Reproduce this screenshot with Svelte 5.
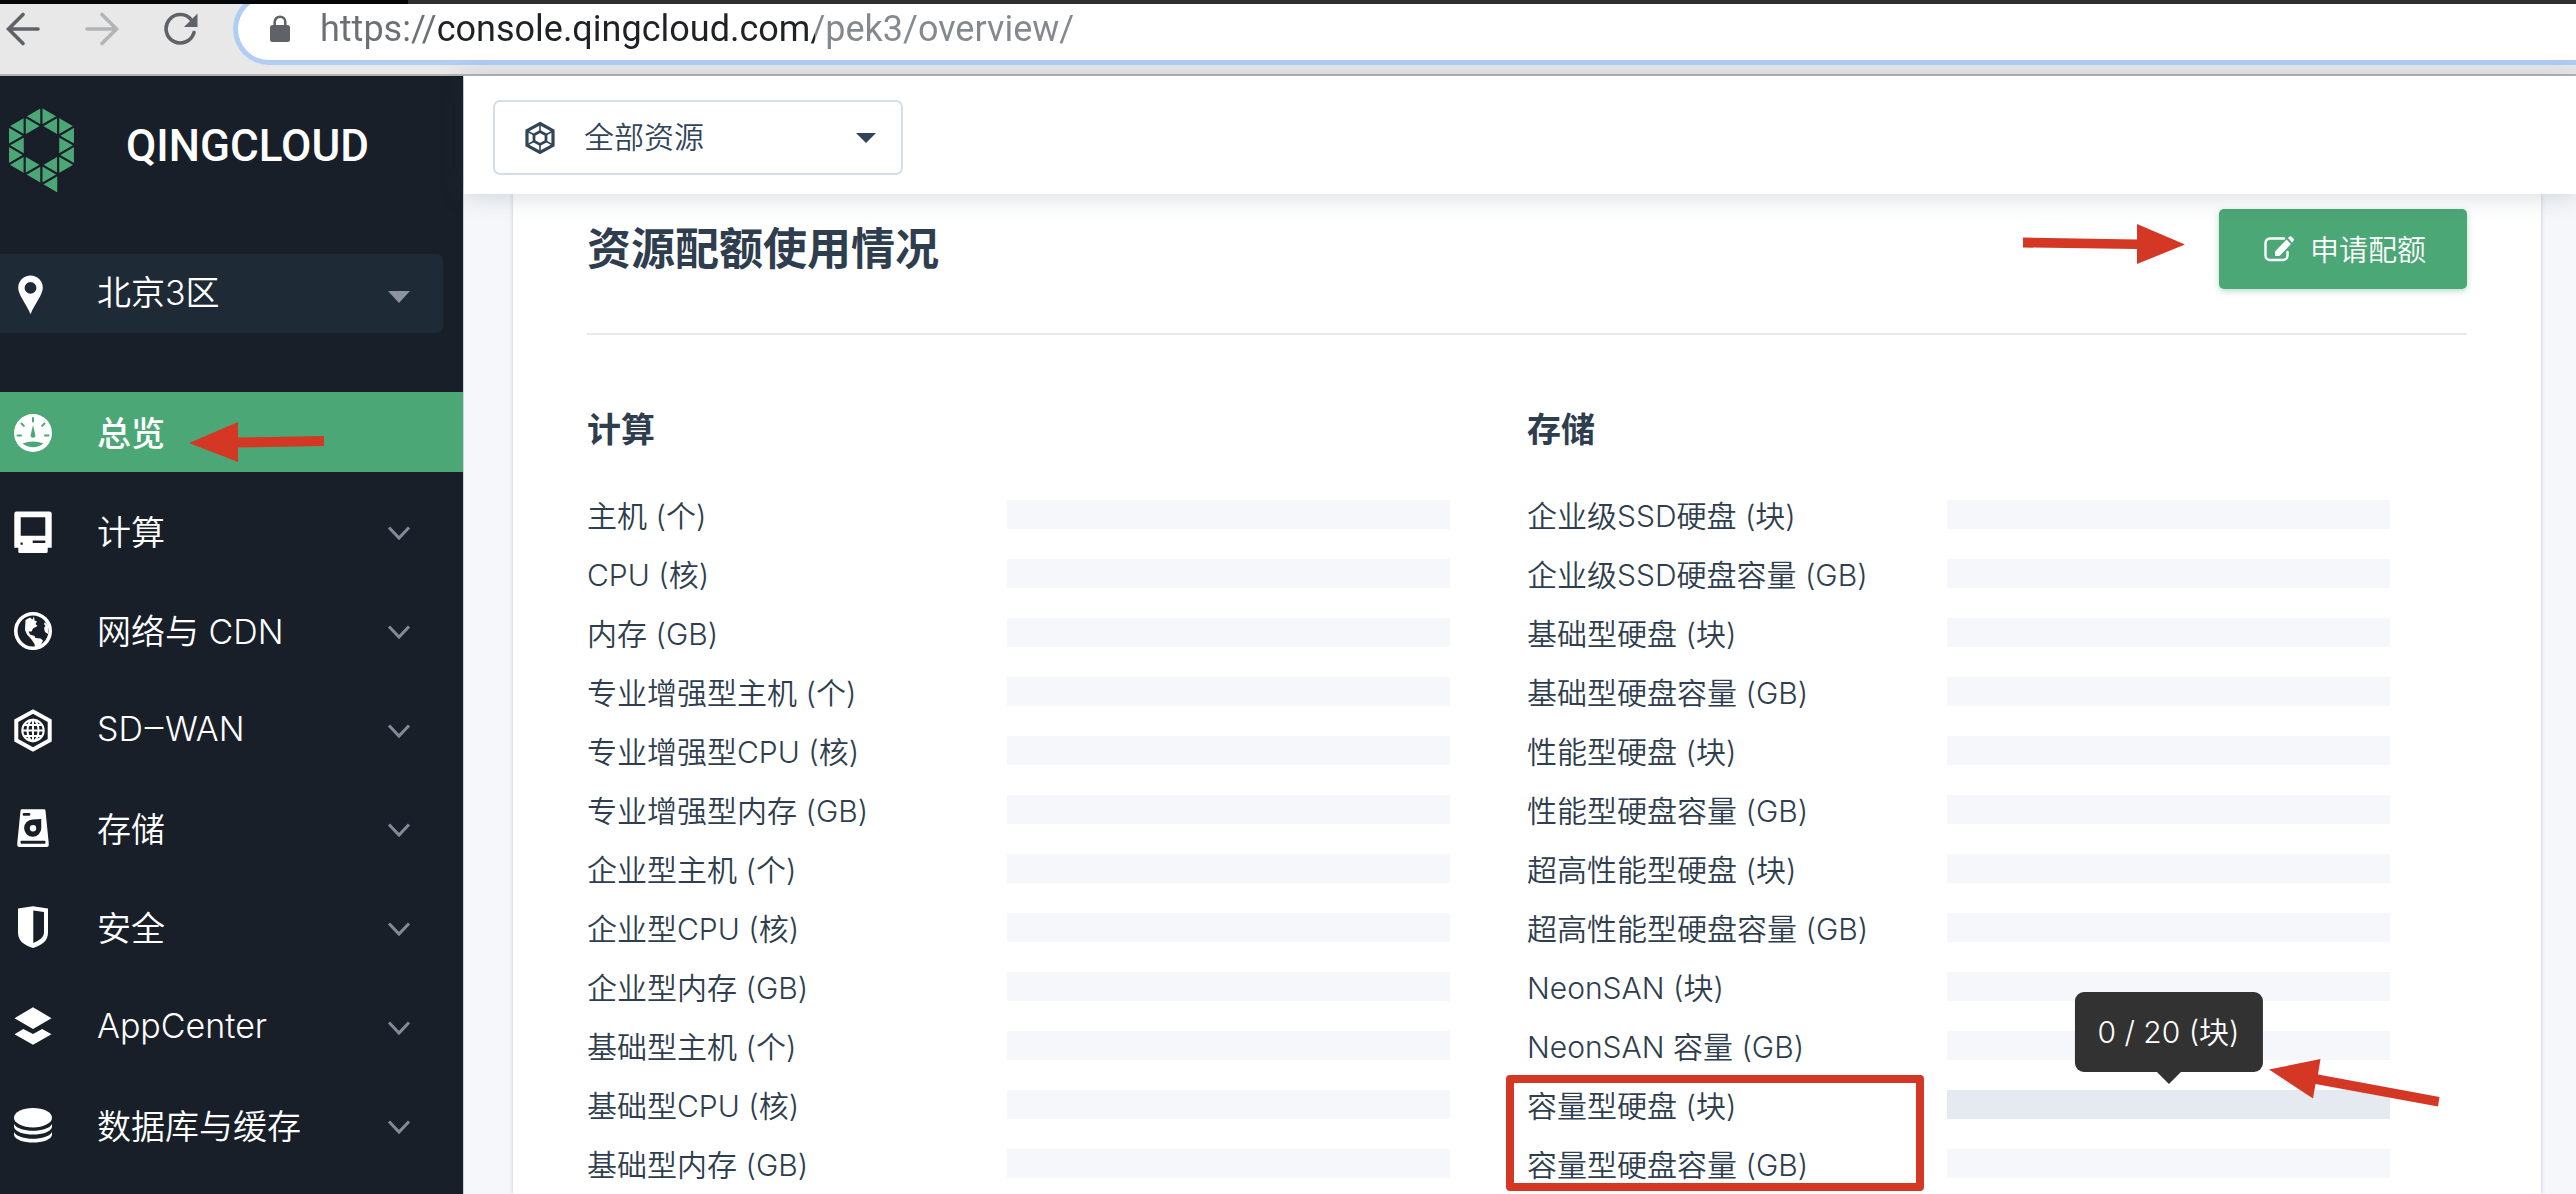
<!--
  Console overview page: browser toolbar, service sidebar and the
  resource quota card, with pointer arrows that mark the steps.
-->

<script lang="ts">
	type NavItem = { icon: string; label: string; active?: boolean };

	const navItems: NavItem[] = [
		{ icon: 'dashboard', label: '总览', active: true },
		{ icon: 'compute', label: '计算' },
		{ icon: 'network', label: '网络与 CDN' },
		{ icon: 'sdwan', label: 'SD‒WAN' },
		{ icon: 'storage', label: '存储' },
		{ icon: 'security', label: '安全' },
		{ icon: 'apps', label: 'AppCenter' },
		{ icon: 'database', label: '数据库与缓存' },
	];

	const computeQuotas = [
		'主机 (个)',
		'CPU (核)',
		'内存 (GB)',
		'专业增强型主机 (个)',
		'专业增强型CPU (核)',
		'专业增强型内存 (GB)',
		'企业型主机 (个)',
		'企业型CPU (核)',
		'企业型内存 (GB)',
		'基础型主机 (个)',
		'基础型CPU (核)',
		'基础型内存 (GB)',
	];

	const storageQuotas = [
		'企业级SSD硬盘 (块)',
		'企业级SSD硬盘容量 (GB)',
		'基础型硬盘 (块)',
		'基础型硬盘容量 (GB)',
		'性能型硬盘 (块)',
		'性能型硬盘容量 (GB)',
		'超高性能型硬盘 (块)',
		'超高性能型硬盘容量 (GB)',
		'NeonSAN (块)',
		'NeonSAN 容量 (GB)',
		'容量型硬盘 (块)',
		'容量型硬盘容量 (GB)',
	];

	const sections = [
		{ title: '计算', rows: computeQuotas, hovered: -1 },
		{ title: '存储', rows: storageQuotas, hovered: 10 },
	];

	/** Logo triangles as [edge x, apex x, centre y] on the lattice. */
	const logoTriangles = [
		[100, 50, 28], [100, 150, 28],
		[50, 0, 57], [50, 100, 57], [150, 100, 57], [150, 200, 57],
		[0, 50, 86], [200, 150, 86],
		[50, 0, 115], [150, 200, 115],
		[0, 50, 144], [200, 150, 144],
		[50, 0, 173], [50, 100, 173], [150, 100, 173], [150, 200, 173],
		[100, 50, 202], [100, 150, 202],
		[150, 100, 231],
	];

	let url = $state('https://console.qingcloud.com/pek3/overview/');
	let zone = $state('pek3');
	let scope = $state('all');
</script>

{#snippet navIcon(name: string)}
	<svg class="nav-icon" viewBox="0 0 40 44" aria-hidden="true">
		{#if name === 'pin'}
			<path fill-rule="evenodd" d="M17.5 3.5a12.3 12.3 0 0 1 12.3 12.3c0 7-7.5 15-12.3 26.5C12.7 30.8 5.2 22.8 5.2 15.8A12.3 12.3 0 0 1 17.5 3.5zM17.5 10a5.9 5.9 0 1 0 0 11.8a5.9 5.9 0 0 0 0-11.8z" />
		{:else if name === 'dashboard'}
			<path fill-rule="evenodd" d="M20 4a19 19 0 1 1 0 38a19 19 0 0 1 0-38zM20 15l2.2 9.5a2.4 2.4 0 1 1-4.4 0zM9.5 33.5Q20 29.5 30.5 33.5Q20 41 9.5 33.5z" />
			<path class="cut" d="M20 8v3.5M4.5 25.5h3.5M32 25.5h3.5M8.5 13.5l2.4 2.4M31.5 13.5l-2.4 2.4" />
		{:else if name === 'compute'}
			<path fill-rule="evenodd" d="M3.5 2.5h33a2.2 2.2 0 0 1 2.2 2.2v34.1h-4v3.7a1.5 1.5 0 0 1-1.5 1.5H6.8a1.5 1.5 0 0 1-1.5-1.5v-3.7h-4V4.7a2.2 2.2 0 0 1 2.2-2.2zM7.7 8.3v18.5h24.6V8.3zM19.7 31.5v2.5h12.6v-2.5zM7.5 33.5v2.2h2.2v-2.2z" />
		{:else if name === 'network'}
			<circle cx="20" cy="23" r="17.2" fill="none" stroke="#fff" stroke-width="3.6" />
			<path d="M12.5 12l4.5-2.5 2.5 2 1.5-3 .5 4 2.5 1-1.5 2.5 2 2-4.5 2.5-1.5 3h-3l1.5 3 4.5 1.5 1 2 5 .5 2.5 2-2 4-4 3.5-1.5 2-1-6-3-4.5-4.5-5-2-4.5zM32 14l3 4v8l-3-2-1-4 1.500-2-1.500-2z" />
		{:else if name === 'sdwan'}
			<path d="M20 4.5l16.7 9.3v19.4L20 42.5 3.3 33.2V13.8z" fill="none" stroke="#fff" stroke-width="4" />
			<g fill="none" stroke="#fff" stroke-width="2">
				<circle cx="20" cy="23.5" r="10.7" />
				<ellipse cx="20" cy="23.5" rx="5.5" ry="10.7" />
				<path d="M20 13v21M9.5 23.5h21M11.5 18h17M11.5 29h17" />
			</g>
		{:else if name === 'storage'}
			<path fill-rule="evenodd" d="M9 3.3h22a1.5 1.5 0 0 1 1.5 1.4l3.2 32v2.5a1.8 1.8 0 0 1-1.8 1.8H6.1a1.8 1.8 0 0 1-1.8-1.8v-2.5l3.2-32A1.5 1.5 0 0 1 9 3.3zM11 7a1.2 1.2 0 0 0 0 2.8h5a1.2 1.2 0 0 0 0-2.8zM28.2 13l-8.5.5a8.6 8.6 0 1 0 8.6 8.6zM20 19a3.2 3.2 0 1 1 0 6.4a3.2 3.2 0 0 1 0-6.4zM8.5 34.7a1 1 0 0 0-1 1v1a1 1 0 0 0 1 1h23a1 1 0 0 0 1-1v-1a1 1 0 0 0-1-1z" />
		{:else if name === 'security'}
			<path fill-rule="evenodd" d="M20 1.3L35 3.5v24c0 9-7 13-15 15.5C12 40.500 5 36.500 5 27.500v-24zM20.300 5.500V38c6-2.500 10.700-5.500 10.700-11V7z" />
		{:else if name === 'apps'}
			<path d="M20 3.3l18.5 10.9L20 25 1.5 14.2zM10.3 25L20 30l9.2-5 9.3 5.2L20 40.7 1.5 30.2z" />
		{:else if name === 'database'}
			<ellipse cx="20" cy="14.7" rx="19" ry="9.7" />
			<path d="M1 21C5 30 35 30 39 21v3C37 34 3 34 1 24zM1 29C5 38 35 38 39 29v3C37 42 3 42 1 32z" />
		{/if}
	</svg>
{/snippet}

<div class="window">
	<div class="tab-strip"><span class="tab-edge"></span></div>

	<div class="toolbar">
		<button type="button" class="tool" aria-label="Back">
			<svg viewBox="0 0 34 34"><path d="M32 17H3M17 2.5L2.5 17 17 31.5" /></svg>
		</button>
		<button type="button" class="tool tool-off" aria-label="Forward" disabled>
			<svg viewBox="0 0 34 34"><path d="M2 17h29M17 2.5L31.5 17 17 31.5" /></svg>
		</button>
		<button type="button" class="tool" aria-label="Reload">
			<svg viewBox="0 0 34 34">
				<path d="M30 20.5A14.2 14.2 0 1 1 27.5 8" />
				<path class="solid" d="M33.5 1.5V15H20z" />
			</svg>
		</button>
		<div class="omnibox">
			<svg class="lock" viewBox="0 0 20 28" aria-hidden="true">
				<path d="M4.7 12V7a5.3 5.3 0 0 1 10.6 0v5" fill="none" stroke="#5f6368" stroke-width="2.6" />
				<rect y="10" width="20" height="17" rx="2.5" fill="#5f6368" />
			</svg>
			<input class="url" type="text" aria-label="Address" bind:value={url} />
		</div>
	</div>

	<div class="console">
		<aside class="sidebar">
			<a class="brand" href="#home">
				<svg class="brand-mark" viewBox="0 0 200 260" aria-hidden="true">
					{#each logoTriangles as [edge, apex, y]}
						<path d="M{edge} {y - 29}L{apex} {y}L{edge} {y + 29}z" />
					{/each}
				</svg>
				<span class="brand-name">QINGCLOUD</span>
			</a>

			<div class="zone">
				{@render navIcon('pin')}
				<select aria-label="区域" bind:value={zone}>
					<option value="pek3">北京3区</option>
				</select>
				<svg class="zone-caret" viewBox="0 0 24 24" aria-hidden="true"><path d="M1 9h22L12 21z" /></svg>
			</div>

			<nav class="nav">
				{#each navItems as item}
					<a class="nav-item" class:active={item.active} href="#{item.icon}">
						{@render navIcon(item.icon)}
						<span class="nav-label">{item.label}</span>
						{#if item.active}
							<svg class="pointer pointer-nav" viewBox="0 0 136 40" aria-hidden="true">
								<path d="M0 21L49 0V15.5L135 14v10L49 25.5V40z" />
							</svg>
						{:else}
							<svg class="chevron" viewBox="0 0 24 24" aria-hidden="true"><path d="M2 8.5l10 10.5 10-10.5" /></svg>
						{/if}
					</a>
				{/each}
			</nav>
		</aside>

		<main class="main">
			<header class="topbar">
				<div class="scope">
					<svg class="scope-icon" viewBox="0 0 30 34" aria-hidden="true">
						<path d="M15 2.5l13 7.2v14.6l-13 7.2-13-7.2V9.7z" stroke-width="3.2" />
						<path d="M15 10.5l6 3.3v6.4l-6 3.3-6-3.3v-6.4z" stroke-width="2.8" />
						<path d="M15 2v8M15 24v8M2 10l7 3.8M28 10l-7 3.8M2 24l7-3.8M28 24l-7-3.8" stroke-width="1.6" />
					</svg>
					<select aria-label="资源范围" bind:value={scope}>
						<option value="all">全部资源</option>
					</select>
					<svg class="scope-caret" viewBox="0 0 20 10" aria-hidden="true"><path d="M0 0h20L10 10z" /></svg>
				</div>
			</header>

			<section class="card">
				<div class="card-head">
					<h2>资源配额使用情况</h2>
					<svg class="pointer pointer-apply" viewBox="0 0 162 40" aria-hidden="true">
						<path d="M0 13.5L114 15.5V0l48 20.5L114 40V25L0 23.5z" />
					</svg>
					<button type="button" class="apply">
						<svg viewBox="0 0 30 26" aria-hidden="true">
							<path class="sheet" d="M20 2.5H6A4.5 4.5 0 0 0 1.5 7v12.5A4.5 4.5 0 0 0 6 24h13a4.5 4.5 0 0 0 4.5-4.5V16" />
							<path d="M11 15.5L22.5 3.5l4.5 4.5L15.5 20H11zM24 2l1.2-1.2a1.8 1.8 0 0 1 2.4 0l1.8 1.8a1.8 1.8 0 0 1 0 2.4L28.2 6.5z" />
						</svg>
						<span>申请配额</span>
					</button>
				</div>

				<div class="quota-grid">
					{#each sections as section}
						<div class="quota-section">
							<h3>{section.title}</h3>
							<ul>
								{#each section.rows as row, i}
									<li class="quota-row">
										<span class="quota-label">{row}</span>
										<div class="quota-bar" class:hovered={i === section.hovered}>
											{#if i === section.hovered}
												<div class="tooltip" role="tooltip">0 / 20 (块)</div>
												<svg class="pointer pointer-quota" viewBox="0 0 171 48" aria-hidden="true">
													<path d="M0 10.5L51.5 0 49 15.5 170.5 38l-1.5 9.5L46.5 25 44 39.5z" />
												</svg>
											{/if}
										</div>
									</li>
								{/each}
							</ul>
							{#if section.hovered >= 0}
								<div class="highlight"></div>
							{/if}
						</div>
					{/each}
				</div>
			</section>
		</main>
	</div>
</div>

<style>
	:global(body) {
		margin: 0;
		background: #f5f7fa;
	}

	.window {
		display: flex;
		flex-direction: column;
		height: 100vh;
		overflow: hidden;
		font-family: Inter, 'Noto Sans CJK SC', sans-serif;
		font-weight: 350;
		color: #2f3e4e;
	}

	.window select {
		appearance: none;
		flex: 1;
		min-width: 0;
		padding: 0 0 2px;
		border: 0;
		background: none;
		color: inherit;
		font: inherit;
		outline: none;
	}

	/* ─── Browser toolbar ────────────────────────────────────────────── */

	.tab-strip {
		flex: none;
		height: 4px;
		background: #2f3032;
	}

	.tab-edge {
		display: block;
		width: 408px;
		height: 4px;
		background: #050608;
	}

	.toolbar {
		box-sizing: border-box;
		flex: none;
		display: flex;
		align-items: center;
		height: 72px;
		padding: 0 0 20px 6px;
		background: #e8e8e8;
		border-bottom: 2px solid #b4b4b4;
		overflow: hidden;
	}

	.tool {
		width: 34px;
		height: 34px;
		margin-right: 45px;
		padding: 0;
		border: 0;
		background: none;
	}

	.tool svg {
		display: block;
		fill: none;
		stroke: #5f6368;
		stroke-width: 3.6;
		stroke-linecap: round;
	}

	.tool .solid {
		fill: #5f6368;
		stroke: none;
	}

	.tool-off svg {
		stroke: #b3b4b6;
	}

	.omnibox {
		box-sizing: border-box;
		flex: 1;
		display: flex;
		align-items: center;
		height: 72px;
		margin-left: -10px;
		padding-left: 32px;
		border: 5px solid #b0cdf4;
		border-right: 0;
		border-radius: 36px 0 0 36px;
		background: #fff;
	}

	.lock {
		width: 20px;
		height: 28px;
		margin-right: 30px;
	}

	/* Scheme, host and path get their own tone through the clipped gradient. */
	.url {
		flex: 1;
		height: 48px;
		padding: 0;
		border: 0;
		outline: none;
		font-family: Roboto, sans-serif;
		font-size: 36px;
		background: linear-gradient(90deg, #6b7075 118px, #202124 118px, #202124 495px, #84898e 495px);
		background-clip: text;
		-webkit-background-clip: text;
		-webkit-text-fill-color: transparent;
	}

	/* ─── Sidebar ────────────────────────────────────────────────────── */

	.console {
		flex: 1;
		display: flex;
		min-height: 0;
	}

	.sidebar {
		flex: none;
		width: 463px;
		background: #181f28;
		border-right: 1px solid #cdd3da;
		color: #fff;
		font-size: 34px;
	}

	.brand {
		display: flex;
		align-items: flex-start;
		gap: 51px;
		height: 146px;
		padding: 31px 0 0 8px;
		box-sizing: border-box;
		margin-bottom: 32px;
		color: #fff;
		text-decoration: none;
	}

	.brand-mark {
		width: 67px;
		height: 87px;
		fill: #4ca776;
		stroke: #181f28;
		stroke-width: 6;
	}

	.brand-name {
		font-family: Roboto, sans-serif;
		font-size: 44px;
		font-weight: 500;
		line-height: 78px;
	}

	.zone {
		box-sizing: border-box;
		display: flex;
		align-items: center;
		height: 79px;
		margin: 0 20px 59px 0;
		padding: 0 32px 0 13px;
		border-radius: 0 6px 6px 0;
		background: #1f2a37;
	}

	.nav-icon {
		flex: none;
		width: 40px;
		height: 44px;
		margin-right: 44px;
		fill: #fff;
		overflow: visible;
	}

	.nav-icon .cut {
		fill: none;
		stroke: #4ca776;
		stroke-width: 2;
		stroke-linecap: round;
	}

	.zone-caret {
		width: 24px;
		height: 24px;
		fill: #8a939e;
	}

	.nav {
		display: flex;
		flex-direction: column;
		gap: 19px;
	}

	.nav-item {
		position: relative;
		box-sizing: border-box;
		display: flex;
		align-items: center;
		height: 80px;
		padding: 0 52px 0 13px;
		color: #fff;
		text-decoration: none;
	}

	.nav-item.active {
		background: #4ca776;
		font-weight: 500;
	}

	.nav-label {
		flex: 1;
		padding-bottom: 2px;
	}

	.chevron {
		width: 24px;
		height: 24px;
		fill: none;
		stroke: #818b97;
		stroke-width: 3;
	}

	/* ─── Pointer arrows ─────────────────────────────────────────────── */

	.pointer {
		position: absolute;
		fill: #d43724;
	}

	.pointer-nav {
		left: 189px;
		top: 30px;
		width: 136px;
		height: 40px;
	}

	.pointer-apply {
		right: 282px;
		top: 15px;
		width: 162px;
		height: 40px;
	}

	.pointer-quota {
		right: -50px;
		bottom: 12px;
		width: 171px;
		height: 48px;
	}

	/* ─── Top bar ────────────────────────────────────────────────────── */

	.main {
		flex: 1;
		min-width: 0;
		display: flex;
		flex-direction: column;
		background: #f5f7fa;
	}

	.topbar {
		position: relative;
		z-index: 1;
		box-sizing: border-box;
		flex: none;
		height: 118px;
		padding: 24px 0 0 29px;
		background: #fff;
		box-shadow: 0 2px 24px rgba(50, 69, 88, 0.2);
	}

	.scope {
		box-sizing: border-box;
		display: flex;
		align-items: center;
		width: 410px;
		height: 75px;
		padding: 0 25px 0 30px;
		border: 2px solid #d5dee7;
		border-radius: 7px;
		color: #324558;
		font-size: 30px;
	}

	.scope-icon {
		width: 30px;
		height: 34px;
		margin-right: 29px;
		fill: none;
		stroke: #324558;
	}

	.scope-caret {
		width: 20px;
		height: 10px;
		fill: #324558;
	}

	/* ─── Quota card ─────────────────────────────────────────────────── */

	.card {
		flex: 1;
		min-height: 0;
		margin: 0 35px 0 49px;
		padding: 15px 74px 0;
		background: #fff;
		box-shadow: 0 0 4px rgba(50, 69, 88, 0.25);
	}

	.card-head {
		position: relative;
		display: flex;
		align-items: center;
		justify-content: space-between;
		padding-bottom: 44px;
		border-bottom: 2px solid #e6ebf0;
	}

	h2 {
		margin: 0;
		font-size: 44px;
		font-weight: 700;
		line-height: 80px;
	}

	.apply {
		display: flex;
		align-items: center;
		gap: 16px;
		height: 80px;
		padding: 0 41px 0 45px;
		border: 0;
		border-radius: 5px;
		background: #4ca776;
		box-shadow: 0 2px 6px rgba(76, 167, 118, 0.4);
		color: #fff;
		font: inherit;
		font-size: 29px;
	}

	.apply span {
		padding-bottom: 2px;
	}

	.apply svg {
		width: 30px;
		height: 26px;
		fill: #fff;
	}

	.apply .sheet {
		fill: none;
		stroke: #fff;
		stroke-width: 2.4;
		stroke-linecap: round;
	}

	.quota-grid {
		display: grid;
		grid-template-columns: 1fr 1fr;
		padding-top: 75px;
	}

	.quota-section {
		position: relative;
	}

	h3 {
		margin: 0 0 35px;
		font-size: 34px;
		font-weight: 700;
		line-height: 40px;
	}

	ul {
		margin: 0;
		padding: 0;
		list-style: none;
	}

	.quota-row {
		display: flex;
		align-items: center;
		height: 59px;
		font-size: 30px;
	}

	.quota-label {
		flex: none;
		width: 420px;
		padding-bottom: 2px;
		white-space: nowrap;
	}

	.quota-bar {
		position: relative;
		flex: 1;
		height: 29px;
		margin-right: 77px;
		background: #f5f7fa;
	}

	.quota-bar.hovered {
		background: #e5eaf1;
	}

	.tooltip {
		position: absolute;
		left: 50%;
		bottom: calc(100% + 18px);
		transform: translateX(-50%);
		padding: 0 23px;
		border-radius: 9px;
		background: #323232;
		color: #fff;
		font-size: 30px;
		line-height: 80px;
		white-space: nowrap;
	}

	.tooltip::after {
		content: '';
		position: absolute;
		left: 50%;
		top: 100%;
		margin-left: -12px;
		border: 12px solid transparent;
		border-top-color: #323232;
		border-bottom: 0;
	}

	/* Frame round the last two storage rows. */
	.highlight {
		position: absolute;
		left: -21px;
		bottom: 2px;
		box-sizing: border-box;
		width: 418px;
		height: 116px;
		border: 8px solid #d43724;
		border-radius: 4px;
	}
</style>
